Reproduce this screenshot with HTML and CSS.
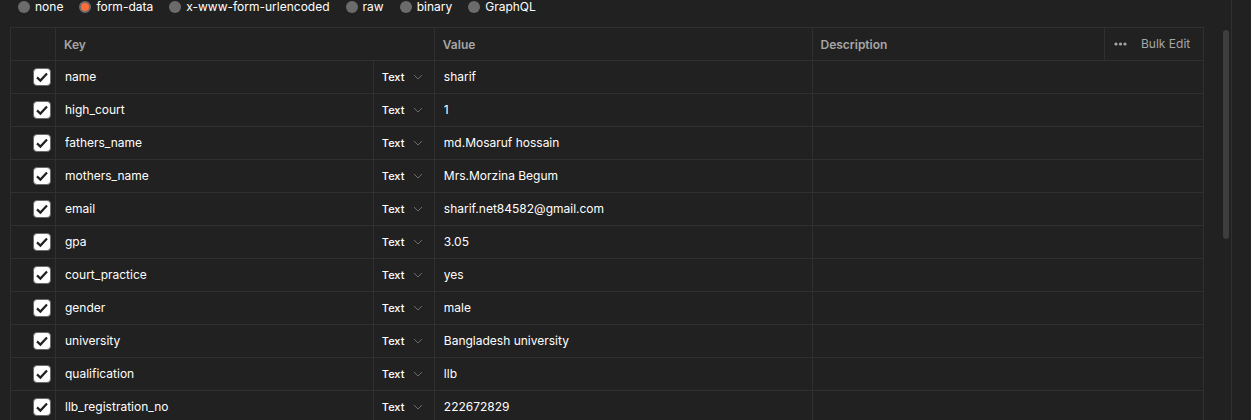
FILE: index.html
```
<!DOCTYPE html>
<html lang="en">
<head>
<meta charset="utf-8">
<title>Request body</title>
<link rel="stylesheet" href="styles.css">
</head>
<body>
<svg class="sprite" aria-hidden="true">
  <symbol id="check" viewBox="0 0 18 18"><path d="M4 9.4 7.4 12.6 14 5.4" fill="none" stroke="#212121" stroke-width="2.2"/></symbol>
  <symbol id="chevron" viewBox="0 0 10 6"><path d="M1 1 5 5 9 1" fill="none" stroke="#6b6b6b" stroke-width="1"/></symbol>
</svg>
<main class="panel">
  <form class="modes">
    <label class="mode"><input type="radio" name="mode">none</label>
    <label class="mode"><input type="radio" name="mode" checked>form-data</label>
    <label class="mode"><input type="radio" name="mode">x-www-form-urlencoded</label>
    <label class="mode"><input type="radio" name="mode">raw</label>
    <label class="mode"><input type="radio" name="mode">binary</label>
    <label class="mode"><input type="radio" name="mode">GraphQL</label>
  </form>
  <div class="editor">
    <table class="grid">
      <colgroup><col class="col-check"><col class="col-key"><col class="col-type"><col class="col-value"><col><col class="col-actions"></colgroup>
      <thead>
        <tr>
          <th></th><th colspan="2">Key</th><th>Value</th><th>Description</th>
          <th><div class="actions"><button class="more" type="button" aria-label="More options"><svg width="13" height="4" viewBox="0 0 13 4"><g fill="#a6a6a6"><circle cx="2" cy="2" r="1.6"/><circle cx="6.5" cy="2" r="1.6"/><circle cx="11" cy="2" r="1.6"/></g></svg></button><button class="bulk" type="button">Bulk Edit</button></div></th>
        </tr>
      </thead>
      <tbody>
        <tr><td><span class="tick"><input type="checkbox" aria-label="Use name" checked><svg><use href="#check"/></svg></span></td><td><input class="field" aria-label="Key" value="name"></td><td><span class="type"><select aria-label="Type"><option>Text</option><option>File</option></select><svg><use href="#chevron"/></svg></span></td><td><input class="field" aria-label="Value" value="sharif"></td><td colspan="2"><input class="field" aria-label="Description"></td></tr>
        <tr><td><span class="tick"><input type="checkbox" aria-label="Use high_court" checked><svg><use href="#check"/></svg></span></td><td><input class="field" aria-label="Key" value="high_court"></td><td><span class="type"><select aria-label="Type"><option>Text</option><option>File</option></select><svg><use href="#chevron"/></svg></span></td><td><input class="field" aria-label="Value" value="1"></td><td colspan="2"><input class="field" aria-label="Description"></td></tr>
        <tr><td><span class="tick"><input type="checkbox" aria-label="Use fathers_name" checked><svg><use href="#check"/></svg></span></td><td><input class="field" aria-label="Key" value="fathers_name"></td><td><span class="type"><select aria-label="Type"><option>Text</option><option>File</option></select><svg><use href="#chevron"/></svg></span></td><td><input class="field" aria-label="Value" value="md.Mosaruf hossain"></td><td colspan="2"><input class="field" aria-label="Description"></td></tr>
        <tr><td><span class="tick"><input type="checkbox" aria-label="Use mothers_name" checked><svg><use href="#check"/></svg></span></td><td><input class="field" aria-label="Key" value="mothers_name"></td><td><span class="type"><select aria-label="Type"><option>Text</option><option>File</option></select><svg><use href="#chevron"/></svg></span></td><td><input class="field" aria-label="Value" value="Mrs.Morzina Begum"></td><td colspan="2"><input class="field" aria-label="Description"></td></tr>
        <tr><td><span class="tick"><input type="checkbox" aria-label="Use email" checked><svg><use href="#check"/></svg></span></td><td><input class="field" aria-label="Key" value="email"></td><td><span class="type"><select aria-label="Type"><option>Text</option><option>File</option></select><svg><use href="#chevron"/></svg></span></td><td><input class="field" aria-label="Value" value="sharif.net84582@gmail.com"></td><td colspan="2"><input class="field" aria-label="Description"></td></tr>
        <tr><td><span class="tick"><input type="checkbox" aria-label="Use gpa" checked><svg><use href="#check"/></svg></span></td><td><input class="field" aria-label="Key" value="gpa"></td><td><span class="type"><select aria-label="Type"><option>Text</option><option>File</option></select><svg><use href="#chevron"/></svg></span></td><td><input class="field" aria-label="Value" value="3.05"></td><td colspan="2"><input class="field" aria-label="Description"></td></tr>
        <tr><td><span class="tick"><input type="checkbox" aria-label="Use court_practice" checked><svg><use href="#check"/></svg></span></td><td><input class="field" aria-label="Key" value="court_practice"></td><td><span class="type"><select aria-label="Type"><option>Text</option><option>File</option></select><svg><use href="#chevron"/></svg></span></td><td><input class="field" aria-label="Value" value="yes"></td><td colspan="2"><input class="field" aria-label="Description"></td></tr>
        <tr><td><span class="tick"><input type="checkbox" aria-label="Use gender" checked><svg><use href="#check"/></svg></span></td><td><input class="field" aria-label="Key" value="gender"></td><td><span class="type"><select aria-label="Type"><option>Text</option><option>File</option></select><svg><use href="#chevron"/></svg></span></td><td><input class="field" aria-label="Value" value="male"></td><td colspan="2"><input class="field" aria-label="Description"></td></tr>
        <tr><td><span class="tick"><input type="checkbox" aria-label="Use university" checked><svg><use href="#check"/></svg></span></td><td><input class="field" aria-label="Key" value="university"></td><td><span class="type"><select aria-label="Type"><option>Text</option><option>File</option></select><svg><use href="#chevron"/></svg></span></td><td><input class="field" aria-label="Value" value="Bangladesh university"></td><td colspan="2"><input class="field" aria-label="Description"></td></tr>
        <tr><td><span class="tick"><input type="checkbox" aria-label="Use qualification" checked><svg><use href="#check"/></svg></span></td><td><input class="field" aria-label="Key" value="qualification"></td><td><span class="type"><select aria-label="Type"><option>Text</option><option>File</option></select><svg><use href="#chevron"/></svg></span></td><td><input class="field" aria-label="Value" value="llb"></td><td colspan="2"><input class="field" aria-label="Description"></td></tr>
        <tr><td><span class="tick"><input type="checkbox" aria-label="Use llb_registration_no" checked><svg><use href="#check"/></svg></span></td><td><input class="field" aria-label="Key" value="llb_registration_no"></td><td><span class="type"><select aria-label="Type"><option>Text</option><option>File</option></select><svg><use href="#chevron"/></svg></span></td><td><input class="field" aria-label="Value" value="222672829"></td><td colspan="2"><input class="field" aria-label="Description"></td></tr>
      </tbody>
    </table>
    <div class="scroll"><div class="thumb"></div></div>
  </div>
</main>
</body>
</html>
```
FILE: styles.css
```
* { box-sizing: border-box; }
body {
  margin: 0;
  height: 100vh;
  overflow: hidden;
  background: #212121;
  color: #fff;
  font: 400 12px/14px Inter, sans-serif;
}
input, select, button {
  appearance: none;
  margin: 0;
  padding: 0;
  border: 0;
  background: none;
  color: inherit;
  font: inherit;
}
svg { display: block; }
.sprite { display: none; }
.panel {
  min-height: 100vh;
  margin-right: 19px;
  padding-left: 10px;
  border-right: 1px solid #303030;
}
.modes {
  display: flex;
  gap: 16px;
  padding: 0 8px 13px;
}
.mode {
  display: flex;
  align-items: center;
  gap: 5px;
}
.mode input {
  width: 12px;
  height: 12px;
  border-radius: 50%;
  background: #6b6b6b;
}
.mode input:checked {
  border: 2px solid #6b6b6b;
  background: #ff6c37;
}
.editor {
  display: flex;
  gap: 19px;
  padding-right: 2px;
}
.grid {
  flex: 1;
  table-layout: fixed;
  border-collapse: collapse;
}
.col-check { width: 45px; }
.col-key { width: 26.64%; }
.col-type { width: 61px; }
.col-value { width: 31.66%; }
.col-actions { width: 99px; }
.grid th, .grid td {
  height: 33px;
  padding: 0 8px;
  border: 1px solid #303030;
  text-align: left;
}
.grid th {
  padding-top: 2px;
  color: #a6a6a6;
  font-weight: 600;
}
.grid th:last-child { padding-top: 0; }
.grid td:first-child { padding: 0 4px; }
.field {
  display: block;
  width: 100%;
  padding-left: 1px;
  outline: 0;
}
.actions {
  display: flex;
  align-items: center;
  gap: 14px;
}
.more { padding: 4px 0 4px 1px; }
.bulk {
  font-weight: 400;
  white-space: nowrap;
}
.tick, .type {
  display: grid;
  align-items: center;
}
.tick { justify-items: end; }
.tick > *, .type > * { grid-area: 1 / 1; }
.tick svg, .type svg { pointer-events: none; }
.tick input {
  width: 18px;
  height: 18px;
  border: 1px solid #6b6b6b;
  border-radius: 4px;
  background: #fff;
}
.tick svg {
  width: 18px;
  height: 18px;
}
.tick input:not(:checked) + svg { display: none; }
.type select {
  width: 100%;
  font-size: 11px;
  font-weight: 500;
}
.type svg {
  justify-self: end;
  width: 10px;
  height: 6px;
  margin-right: 3px;
}
.scroll {
  width: 6px;
  padding-top: 3px;
}
.thumb {
  height: 209px;
  border-radius: 3px;
  background: #3d3d3d;
}
```
